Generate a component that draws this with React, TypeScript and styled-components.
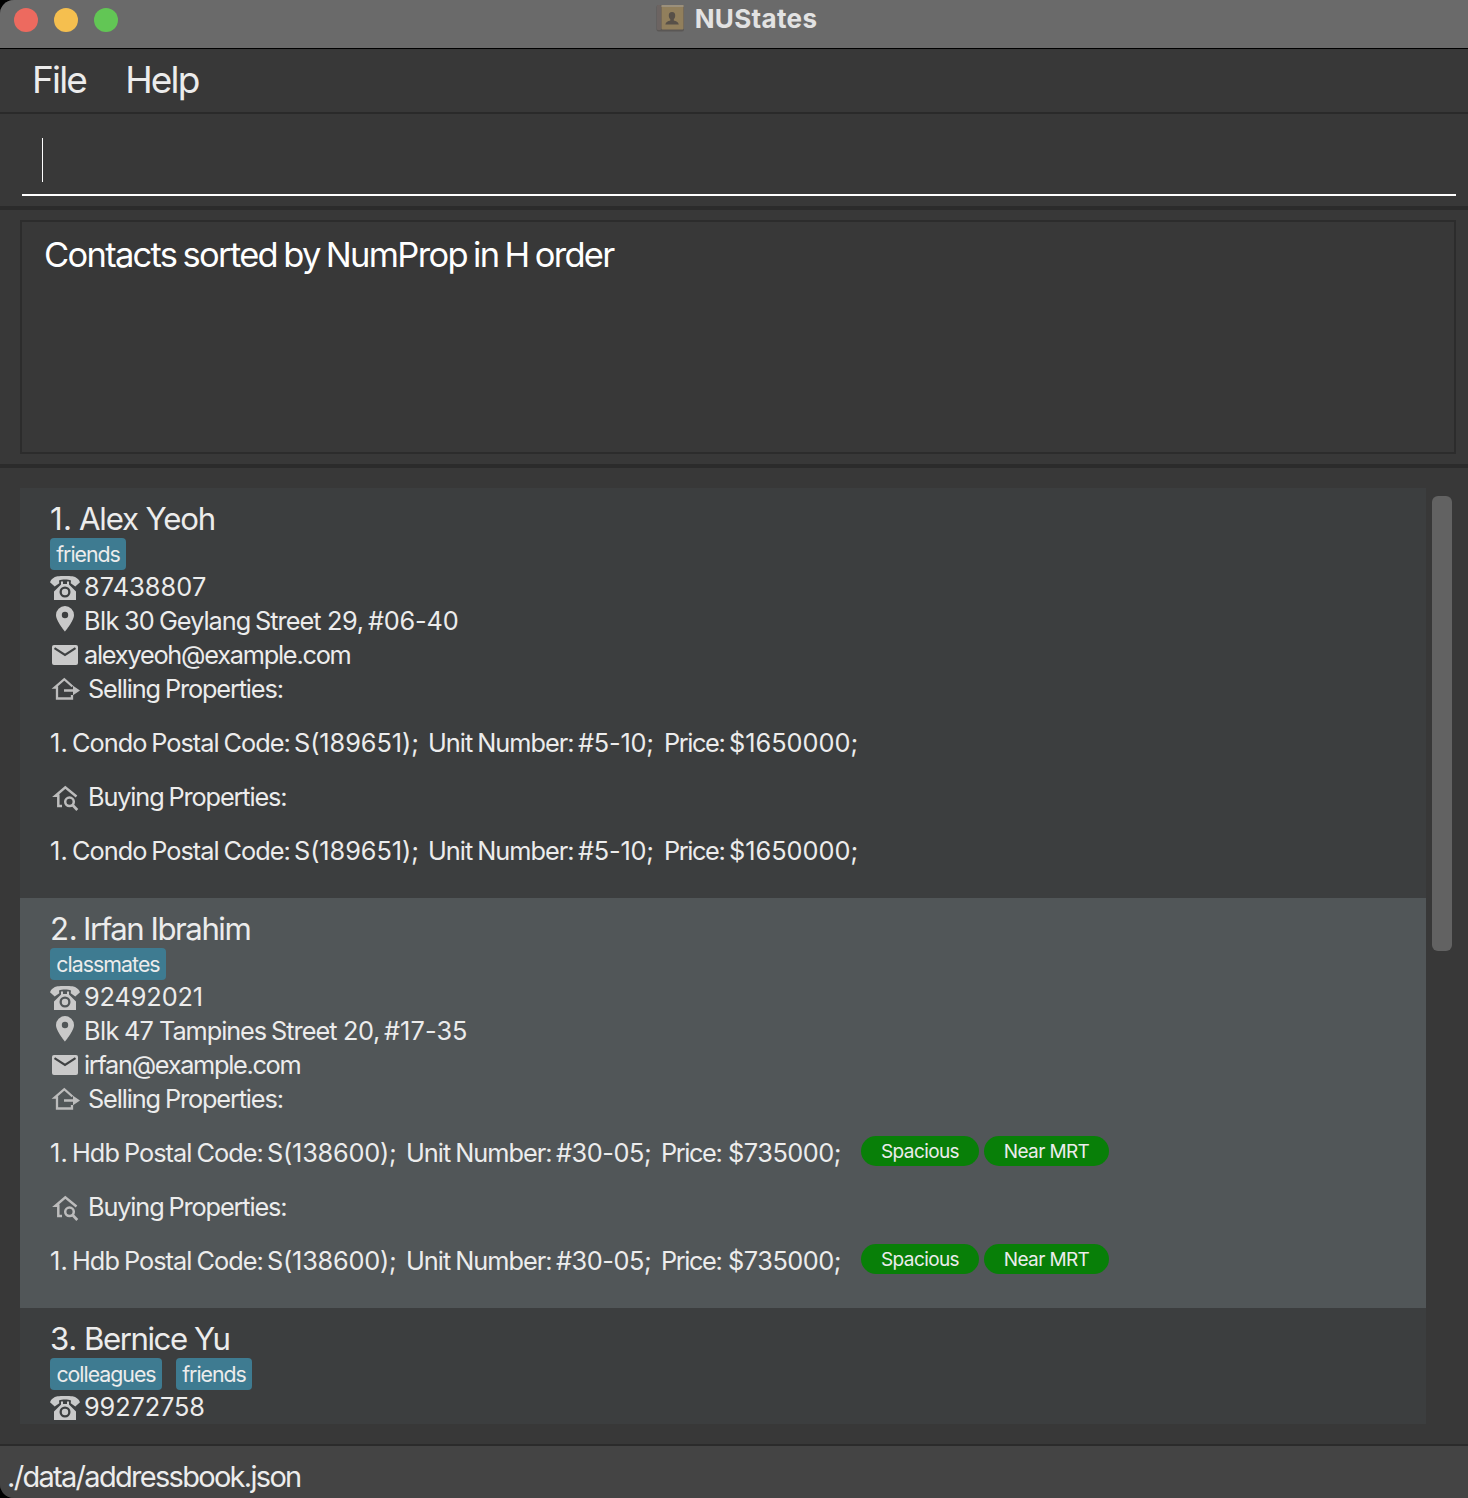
import React from "react";
import styled, { createGlobalStyle } from "styled-components";

const GlobalStyle = createGlobalStyle`
  * { box-sizing: border-box; }
  body { margin: 0; background: #000; overflow: hidden; }
`;

const Window = styled.div`
  display: flex;
  flex-direction: column;
  width: 1468px;
  height: 1498px;
  overflow: hidden;
  border-radius: 14px 0 0 14px;
  background: #383838;
  color: #ececec;
  font-family: Inter, "Liberation Sans", sans-serif;
  font-weight: 400;
`;

const TitleBar = styled.header`
  display: grid;
  grid-template-columns: 1fr auto 1fr;
  flex: none;
  height: 49px;
  padding: 0 14px 9px;
  align-items: center;
  background: #6a6a6a;
  border-bottom: 1px solid #000;
`;

const Lights = styled.div`
  display: flex;
  gap: 16px;
`;

const Light = styled.span<{ $color: string }>`
  width: 24px;
  height: 24px;
  border-radius: 50%;
  background: ${(p) => p.$color};
`;

const Title = styled.div`
  display: flex;
  align-items: center;
  gap: 10px;
  padding: 0 0 3px 5px;
`;

const Text = styled.span<{
  $size: number;
  $track?: number;
  $word?: number;
  $weight?: number;
  $color?: string;
}>`
  font-size: ${(p) => p.$size}px;
  letter-spacing: ${(p) => p.$track ?? 0}px;
  word-spacing: ${(p) => p.$word ?? 0}px;
  font-weight: ${(p) => p.$weight ?? 400};
  color: ${(p) => p.$color ?? "inherit"};
  white-space: pre;
`;

const MenuBar = styled.nav`
  display: flex;
  flex: none;
  height: 65px;
  padding: 0 32px 2px;
  gap: 39px;
  align-items: center;
  border-bottom: 2px solid #2a2a2a;
`;

const CommandPane = styled.section`
  flex: none;
  height: 96px;
  padding: 24px 12px 0 22px;
  border-bottom: 4px solid #2b2b2b;
`;

const CommandField = styled.div`
  display: flex;
  height: 58px;
  padding-left: 20px;
  border-bottom: 2px solid #fff;
`;

const Caret = styled.span`
  width: 1px;
  height: 44px;
  background: #fff;
`;

const ResultPane = styled.section`
  flex: none;
  height: 258px;
  padding: 10px 12px 10px 20px;
  border-bottom: 4px solid #2b2b2b;
`;

const ResultBox = styled.div`
  height: 234px;
  padding: 11px 22px;
  line-height: 44px;
  border: 2px solid #2c2c2c;
`;

const ListPane = styled.main`
  display: flex;
  flex: 1;
  min-height: 0;
  padding: 20px 16px 20px 20px;
  gap: 6px;
`;

const ContactList = styled.div`
  flex: 1;
  overflow: hidden;
`;

const ScrollTrack = styled.div`
  width: 20px;
  padding-top: 8px;
`;

const ScrollThumb = styled.div`
  height: 455px;
  border-radius: 6px;
  background: #626262;
`;

const Card = styled.article<{ $alt: boolean }>`
  height: 410px;
  padding: 12px 30px 10px;
  background: ${(p) => (p.$alt ? "#515658" : "#3c3e3f")};
`;

const NameRow = styled.div`
  display: flex;
  height: 38px;
  align-items: center;
`;

const TagRow = styled.div`
  display: flex;
  height: 32px;
  gap: 14px;
`;

const Tag = styled.span<{ $width: number }>`
  display: flex;
  width: ${(p) => p.$width}px;
  justify-content: center;
  align-items: center;
  border-radius: 4px;
  background: #3e7b91;
`;

const FieldRow = styled.div<{ $gap: number }>`
  display: flex;
  height: 34px;
  gap: ${(p) => p.$gap}px;
  align-items: center;
`;

const FieldValue = styled.span`
  display: flex;
  padding-bottom: 2px;
`;

const PropertyRow = styled.div`
  display: flex;
  height: 74px;
  align-items: center;
`;

const Segment = styled.span<{ $width?: number; $lift?: number }>`
  flex: none;
  width: ${(p) => (p.$width ? `${p.$width}px` : "auto")};
  padding-bottom: ${(p) => p.$lift ?? 0}px;
`;

const Pill = styled.span<{ $width: number }>`
  display: flex;
  width: ${(p) => p.$width}px;
  height: 30px;
  margin: 0 5px 4px 0;
  justify-content: center;
  align-items: center;
  border-radius: 15px;
  background: #087f08;
`;

const StatusBar = styled.footer`
  display: flex;
  flex: none;
  height: 54px;
  padding: 9px 7px 0;
  align-items: center;
  border-top: 2px solid #2b2b2b;
  background: #444;
`;

const Glyph = styled.svg`
  display: block;
  flex: none;
  width: 30px;
  height: 34px;
  fill: #c9c9c9;
`;

const BookIcon = () => (
  <svg width="29" height="28" viewBox="0 0 29 28">
    <rect x="0.5" y="1" width="27.5" height="26.5" rx="2" fill="#5a5755" />
    <rect x="1" y="1" width="4" height="25" rx="1" fill="#6c6462" />
    <rect x="5.5" y="1" width="22" height="24.5" rx="1" fill="#917f5c" />
    <rect x="5.5" y="1" width="22" height="2" fill="#9b907c" />
    <path d="M16 8c2.300 0 3.400 1.600 3.200 3.900-.2 1.800-.8 2.600-1.400 3.300v1.200c1.900.8 4.600 1.100 5 4.200H9.400c.4-3.100 3-3.400 4.900-4.200v-1.200c-.7-.7-1.300-1.500-1.500-3.300C12.600 9.600 13.700 8 16 8z" fill="#575048" />
  </svg>
);

const PhoneIcon = () => (
  <Glyph viewBox="0 0 30 34">
    <path d="M7.500 6.300C11 5.800 19 5.800 22.500 6.300c3.800.8 6.500 2.900 7.500 6L25.300 16.500l-4.600-3.300.3-2.700C18 9.300 12 9.300 9 10.500l.3 2.700-4.600 3.300L0 12.300c1-3.100 3.700-5.200 7.500-6z" />
    <path fillRule="evenodd" d="M11 11.500h2v2.500h4v-2.500h2v3L26 21.500V30H4v-8.500l7-7zM15 16.500a5.500 5.500 0 100 11 5.500 5.500 0 000-11zm0 2.300a3.200 3.200 0 110 6.400 3.200 3.200 0 010-6.400z" />
  </Glyph>
);

const PinIcon = () => (
  <Glyph viewBox="0 0 30 34">
    <path fillRule="evenodd" d="M15 2a9 9 0 00-9 9c0 6 9 16.500 9 16.500S24 17 24 11a9 9 0 00-9-9zm0 5.800a3.200 3.200 0 110 6.400 3.200 3.200 0 010-6.400z" />
  </Glyph>
);

const MailIcon = () => (
  <Glyph viewBox="0 0 30 34">
    <rect x="2" y="7" width="26" height="20" rx="2" />
    <path d="M4.500 10.200L15 17l10.500-6.800" fill="none" stroke="#3f4243" strokeWidth="2.200" />
  </Glyph>
);

const SellIcon = () => (
  <Glyph viewBox="0 0 30 34">
    <path d="M22.500 14.500L14.300 7.200 4.600 15.700H7v10.800h15V23" fill="none" stroke="#bcbcbc" strokeWidth="2.300" />
    <path d="M14 17.200h9v-3.400l7 4.700-7 4.700v-3.400h-9z" fill="#bcbcbc" />
  </Glyph>
);

const BuyIcon = () => (
  <Glyph viewBox="0 0 30 34">
    <path d="M26.500 16.500L15.300 7.400 5.500 15.800h2.800V26H12" fill="none" stroke="#bcbcbc" strokeWidth="2.500" />
    <circle cx="19.500" cy="21.800" r="4.300" fill="none" stroke="#bcbcbc" strokeWidth="2.500" />
    <path d="M22.600 25l4.700 5" stroke="#bcbcbc" strokeWidth="2.600" />
  </Glyph>
);

type Fit = { text: string; track: number; word?: number; width?: number };
type SizedFit = Fit & { width: number };
type Contact = {
  index: Fit;
  name: Fit;
  tags: SizedFit[];
  phone: Fit[];
  address?: Fit[];
  email?: Fit[];
  property?: Fit[];
  features?: SizedFit[];
};

const contacts: Contact[] = [
  {
    index: { text: "1.", width: 29, track: 0.4 },
    name: { text: "Alex Yeoh", track: -1.15 },
    tags: [{ text: "friends", width: 76, track: -1 }],
    phone: [{ text: "87438807", track: 0.1 }],
    address: [
      { text: "Blk 30", width: 75, track: -0.65, word: -1.2 },
      { text: "Geylang", width: 96, track: -1 },
      { text: "Street", width: 72, track: -0.95 },
      { text: "29,", width: 41, track: -0.4 },
      { text: "#06-40", track: -0.2 },
    ],
    email: [{ text: "alexyeoh@example.com", track: -1.23 }],
    property: [
      { text: "1.", width: 22, track: 0.2 },
      { text: "Condo Postal Code:", width: 222, track: -0.95, word: -1.5 },
      { text: "S(189651);", width: 134, track: -0.05 },
      { text: "Unit Number:", width: 150, track: -1, word: -1 },
      { text: "#5-10;", width: 86, track: -0.2 },
      { text: "Price:", width: 65, track: -1.4 },
      { text: "$1650000;", width: 132, track: 0 },
    ],
  },
  {
    index: { text: "2.", width: 33, track: -0.3 },
    name: { text: "Irfan Ibrahim", track: -1.47 },
    tags: [{ text: "classmates", width: 116, track: -0.95 }],
    phone: [{ text: "92492021", track: -0.1 }],
    address: [
      { text: "Blk 47", width: 75, track: -0.65, word: -1.2 },
      { text: "Tampines", width: 112, track: -1.05 },
      { text: "Street", width: 72, track: -0.95 },
      { text: "20,", width: 41, track: -0.4 },
      { text: "#17-35", track: 0.1 },
    ],
    email: [{ text: "irfan@example.com", track: -1.3 }],
    property: [
      { text: "1.", width: 22, track: 0.2 },
      { text: "Hdb Postal Code:", width: 195, track: -0.95, word: -1.2 },
      { text: "S(138600);", width: 139, track: -0.2 },
      { text: "Unit Number:", width: 150, track: -1, word: -1 },
      { text: "#30-05;", width: 105, track: -0.45 },
      { text: "Price:", width: 67, track: -1.4 },
      { text: "$735000;", width: 133, track: -0.45 },
    ],
    features: [
      { text: "Spacious", width: 118, track: -0.6 },
      { text: "Near MRT", width: 125, track: -0.6 },
    ],
  },
  {
    index: { text: "3.", width: 34, track: -0.3 },
    name: { text: "Bernice Yu", track: -1.45 },
    tags: [
      { text: "colleagues", width: 112, track: -1 },
      { text: "friends", width: 76, track: -1 },
    ],
    phone: [{ text: "99272758", track: -0.1 }],
  },
];

const BODY = 25.3;
const NAME = 31.2;

const Pieces = ({ pieces, lift }: { pieces: Fit[]; lift?: number }) => (
  <>
    {pieces.map((p) => (
      <Segment key={p.text} $width={p.width} $lift={lift}>
        <Text $size={BODY} $track={p.track} $word={p.word}>{p.text}</Text>
      </Segment>
    ))}
  </>
);

const Property = ({ pieces, features = [] }: { pieces: Fit[]; features?: SizedFit[] }) => (
  <PropertyRow>
    <Pieces pieces={pieces} lift={2} />
    {features.map((f) => (
      <Pill key={f.text} $width={f.width}>
        <Text $size={19} $track={f.track}>{f.text}</Text>
      </Pill>
    ))}
  </PropertyRow>
);

const Field = ({ icon, pieces, gap = 4 }: { icon: React.ReactNode; pieces: Fit[]; gap?: number }) => (
  <FieldRow $gap={gap}>
    {icon}
    <FieldValue>
      <Pieces pieces={pieces} />
    </FieldValue>
  </FieldRow>
);

const ContactCard = ({ contact, alt }: { contact: Contact; alt: boolean }) => (
  <Card $alt={alt}>
    <NameRow>
      <Segment $width={contact.index.width} $lift={1}>
        <Text $size={NAME} $track={contact.index.track}>{contact.index.text}</Text>
      </Segment>
      <Segment $lift={1}>
        <Text $size={NAME} $track={contact.name.track}>{contact.name.text}</Text>
      </Segment>
    </NameRow>
    <TagRow>
      {contact.tags.map((t) => (
        <Tag key={t.text} $width={t.width}>
          <Text $size={21.3} $track={t.track}>{t.text}</Text>
        </Tag>
      ))}
    </TagRow>
    <Field icon={<PhoneIcon />} pieces={contact.phone} />
    {contact.address && <Field icon={<PinIcon />} pieces={contact.address} />}
    {contact.email && <Field icon={<MailIcon />} pieces={contact.email} />}
    {contact.property && (
      <>
        <Field icon={<SellIcon />} pieces={[{ text: "Selling Properties:", track: -1.13, word: -1 }]} gap={8} />
        <Property pieces={contact.property} features={contact.features} />
        <Field icon={<BuyIcon />} pieces={[{ text: "Buying Properties:", track: -1.13, word: -1 }]} gap={8} />
        <Property pieces={contact.property} features={contact.features} />
      </>
    )}
  </Card>
);

export default function App() {
  return (
    <>
      <GlobalStyle />
      <Window>
        <TitleBar>
          <Lights>
            <Light $color="#ed6a5f" />
            <Light $color="#f5bf4f" />
            <Light $color="#62c655" />
          </Lights>
          <Title>
            <BookIcon />
            <Text $size={26} $weight={700} $track={0.35} $color="#e2e2e2">NUStates</Text>
          </Title>
        </TitleBar>
        <MenuBar>
          <Text $size={37} $track={-1.8}>File</Text>
          <Text $size={37} $track={-1.8}>Help</Text>
        </MenuBar>
        <CommandPane>
          <CommandField>
            <Caret />
          </CommandField>
        </CommandPane>
        <ResultPane>
          <ResultBox>
            <Text $size={34.5} $track={-1.7} $word={-1.8} $color="#fff">Contacts sorted by NumProp in H order</Text>
          </ResultBox>
        </ResultPane>
        <ListPane>
          <ContactList>
            {contacts.map((c, i) => (
              <ContactCard key={c.name.text} contact={c} alt={i % 2 === 1} />
            ))}
          </ContactList>
          <ScrollTrack>
            <ScrollThumb />
          </ScrollTrack>
        </ListPane>
        <StatusBar>
          <Text $size={29} $track={-1.7}>./data/addressbook.json</Text>
        </StatusBar>
      </Window>
    </>
  );
}
